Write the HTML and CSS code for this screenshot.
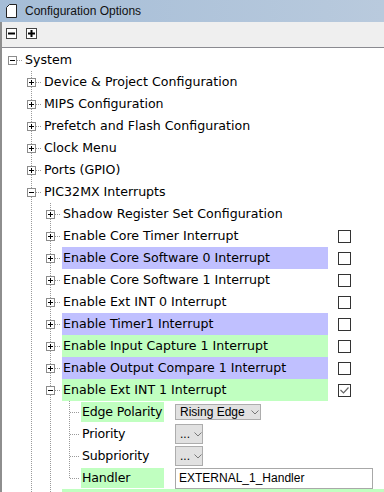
FILE: index.html
```html
<!DOCTYPE html>
<html lang="en">

<head>
  <meta charset="UTF-8">
  <title>Configuration Options</title>
  <link rel="stylesheet" href="styles.css">
</head>

<body>

  <div class="titlebar">
    <svg class="doc-icon" width="11" height="14" viewBox="0 0 11 14">
      <path d="M3.5 0.5 H10.5 V13.5 H0.5 V3.5 Z" fill="#fff" stroke="#222" />
    </svg>
    <span class="title">Configuration Options</span>
  </div>

  <div class="main">
    <div class="toolbar">
      <span class="tool-btn">
        <svg width="11" height="11" viewBox="0 0 11 11"><rect x="0.5" y="0.5" width="10" height="10" fill="#fff" stroke="#444" /><path d="M2 5.5 H9" stroke="#000" stroke-width="2" /></svg>
      </span>
      <span class="tool-btn">
        <svg width="11" height="11" viewBox="0 0 11 11"><rect x="0.5" y="0.5" width="10" height="10" fill="#fff" stroke="#444" /><path d="M2 5.5 H9 M5.5 2 V9" stroke="#000" stroke-width="2" /></svg>
      </span>
    </div>

    <div class="tree">
      <div class="row">
        <span class="cell c"><i class="exp minus"></i></span>
        <span class="label">System</span>
      </div>

      <div class="row">
        <span class="cell"></span><span class="cell c full"><i class="exp plus"></i></span>
        <span class="label">Device &amp; Project Configuration</span>
      </div>
      <div class="row">
        <span class="cell"></span><span class="cell c full"><i class="exp plus"></i></span>
        <span class="label">MIPS Configuration</span>
      </div>
      <div class="row">
        <span class="cell"></span><span class="cell c full"><i class="exp plus"></i></span>
        <span class="label">Prefetch and Flash Configuration</span>
      </div>
      <div class="row">
        <span class="cell"></span><span class="cell c full"><i class="exp plus"></i></span>
        <span class="label">Clock Menu</span>
      </div>
      <div class="row">
        <span class="cell"></span><span class="cell c full"><i class="exp plus"></i></span>
        <span class="label">Ports (GPIO)</span>
      </div>
      <div class="row">
        <span class="cell"></span><span class="cell c full"><i class="exp minus"></i></span>
        <span class="label">PIC32MX Interrupts</span>
      </div>

      <div class="row">
        <span class="cell"></span><span class="cell v"></span><span class="cell c full"><i class="exp plus"></i></span>
        <span class="label">Shadow Register Set Configuration</span>
      </div>
      <div class="row">
        <span class="cell"></span><span class="cell v"></span><span class="cell c full"><i class="exp plus"></i></span>
        <span class="label">Enable Core Timer Interrupt</span>
        <span class="value"><i class="check"></i></span>
      </div>
      <div class="row">
        <span class="cell"></span><span class="cell v"></span><span class="cell c full"><i class="exp plus"></i></span>
        <span class="label blue">Enable Core Software 0 Interrupt</span>
        <span class="value"><i class="check"></i></span>
      </div>
      <div class="row">
        <span class="cell"></span><span class="cell v"></span><span class="cell c full"><i class="exp plus"></i></span>
        <span class="label">Enable Core Software 1 Interrupt</span>
        <span class="value"><i class="check"></i></span>
      </div>
      <div class="row">
        <span class="cell"></span><span class="cell v"></span><span class="cell c full"><i class="exp plus"></i></span>
        <span class="label">Enable Ext INT 0 Interrupt</span>
        <span class="value"><i class="check"></i></span>
      </div>
      <div class="row">
        <span class="cell"></span><span class="cell v"></span><span class="cell c full"><i class="exp plus"></i></span>
        <span class="label blue">Enable Timer1 Interrupt</span>
        <span class="value"><i class="check"></i></span>
      </div>
      <div class="row">
        <span class="cell"></span><span class="cell v"></span><span class="cell c full"><i class="exp plus"></i></span>
        <span class="label green">Enable Input Capture 1 Interrupt</span>
        <span class="value"><i class="check"></i></span>
      </div>
      <div class="row">
        <span class="cell"></span><span class="cell v"></span><span class="cell c full"><i class="exp plus"></i></span>
        <span class="label blue">Enable Output Compare 1 Interrupt</span>
        <span class="value"><i class="check"></i></span>
      </div>
      <div class="row">
        <span class="cell"></span><span class="cell v"></span><span class="cell c full"><i class="exp minus"></i></span>
        <span class="label green">Enable Ext INT 1 Interrupt</span>
        <span class="value">
          <i class="check">
            <svg width="11" height="11" viewBox="0 0 11 11"><path d="M1.5 5 L4.5 8 L9.5 2.5" fill="none" stroke="#666" stroke-width="1.2" /></svg>
          </i>
        </span>
      </div>

      <div class="row">
        <span class="cell"></span><span class="cell v"></span><span class="cell v"></span><span class="cell c full"></span>
        <span class="prop green">Edge Polarity</span>
        <span class="combo wide">Rising Edge
          <svg class="chev" width="8" height="5" viewBox="0 0 8 5"><path d="M0.5 0.5 L4 4 L7.5 0.5" fill="none" stroke="#777" /></svg>
        </span>
      </div>
      <div class="row">
        <span class="cell"></span><span class="cell v"></span><span class="cell v"></span><span class="cell c full"></span>
        <span class="prop">Priority</span>
        <span class="combo">...
          <svg class="chev" width="8" height="5" viewBox="0 0 8 5"><path d="M0.5 0.5 L4 4 L7.5 0.5" fill="none" stroke="#777" /></svg>
        </span>
      </div>
      <div class="row">
        <span class="cell"></span><span class="cell v"></span><span class="cell v"></span><span class="cell c full"></span>
        <span class="prop">Subpriority</span>
        <span class="combo">...
          <svg class="chev" width="8" height="5" viewBox="0 0 8 5"><path d="M0.5 0.5 L4 4 L7.5 0.5" fill="none" stroke="#777" /></svg>
        </span>
      </div>
      <div class="row">
        <span class="cell"></span><span class="cell v"></span><span class="cell v"></span><span class="cell c last"></span>
        <span class="prop green">Handler</span>
        <span class="field">EXTERNAL_1_Handler</span>
      </div>

      <!-- next item, only its top edge is in view -->
      <div class="row">
        <span class="cell"></span><span class="cell v"></span><span class="cell c full"></span>
        <span class="label green"></span>
      </div>
    </div>
  </div>

</body>

</html>
```

FILE: styles.css
```css
* {
  margin: 0;
  padding: 0;
  box-sizing: border-box;
}

body {
  width: 384px;
  height: 492px;
  overflow: hidden;
  background: #fff;
  color: #000;
  font-family: "DejaVu Sans", Verdana, sans-serif;
  font-size: 12.6px;
}

.titlebar {
  height: 22px;
  display: flex;
  align-items: center;
  padding-left: 6px;
  background: linear-gradient(to right, #a5bdd7, #b9cadd);
  font-family: "Liberation Sans", Arial, sans-serif;
  font-size: 12px;
  color: #111;
}

.titlebar .doc-icon {
  display: block;
}

.titlebar .title {
  margin-left: 8px;
}

.main {
  border-left: 2px solid #8e8e8e;
  height: 470px;
}

.toolbar {
  height: 26px;
  display: flex;
  gap: 9px;
  padding: 6px 0 0 4px;
  background: #efefef;
  border-bottom: 1px solid #8a8a90;
}

.tool-btn svg {
  display: block;
}

.tree {
  padding: 1px 0 0 1px;
}

.row {
  height: 22px;
  display: flex;
  align-items: center;
}

/* tree guide columns */
.cell {
  flex: none;
  width: 19px;
  height: 22px;
  display: flex;
  align-items: center;
  background-repeat: no-repeat;
}

.cell.v {
  background-image: repeating-linear-gradient(to bottom, #9a9a9a 0 1px, transparent 1px 2px);
  background-size: 1px 22px;
  background-position: 9px 0;
}

.cell.c {
  background-image: repeating-linear-gradient(to right, #9a9a9a 0 1px, transparent 1px 2px);
  background-size: 10px 1px;
  background-position: 10px 11px;
}

.cell.c.full {
  background-image:
    repeating-linear-gradient(to right, #9a9a9a 0 1px, transparent 1px 2px),
    repeating-linear-gradient(to bottom, #9a9a9a 0 1px, transparent 1px 2px);
  background-size: 10px 1px, 1px 22px;
  background-position: 10px 11px, 9px 0;
}

.cell.c.last {
  background-image:
    repeating-linear-gradient(to right, #9a9a9a 0 1px, transparent 1px 2px),
    repeating-linear-gradient(to bottom, #9a9a9a 0 1px, transparent 1px 2px);
  background-size: 10px 1px, 1px 12px;
  background-position: 10px 11px, 9px 0;
}

.exp {
  width: 9px;
  height: 9px;
  margin-left: 5px;
  border: 1px solid #8c8c8c;
  background: #fff;
  position: relative;
}

.exp::before,
.exp::after {
  content: '';
  position: absolute;
  background: #000;
}

.exp::before {
  left: 1px;
  top: 3px;
  width: 5px;
  height: 1px;
}

.exp.plus::after {
  left: 3px;
  top: 1px;
  width: 1px;
  height: 5px;
}

.label {
  flex: 1;
  height: 22px;
  line-height: 22px;
  margin-left: 2px;
  padding-left: 1px;
  white-space: nowrap;
}

.blue {
  background: #c0c0ff;
}

.green {
  background: #c0ffc0;
}

.value {
  flex: none;
  width: 56px;
  padding-left: 10px;
}

.check {
  display: block;
  width: 13px;
  height: 13px;
  border: 1px solid #333;
  background: #fff;
}

.check svg {
  display: block;
}

/* property rows */
.prop {
  flex: none;
  width: 83px;
  height: 20px;
  line-height: 20px;
  margin-left: 2px;
  padding-left: 1px;
  white-space: nowrap;
  letter-spacing: -0.2px;
}

.combo,
.field {
  margin-left: 11px;
  font-family: "Liberation Sans", Arial, sans-serif;
  font-size: 12px;
}

.combo {
  width: 28px;
  height: 20px;
  display: flex;
  align-items: center;
  padding-left: 4px;
  gap: 4px;
  background: #e1e1e1;
  border: 1px solid #adadad;
}

.combo.wide {
  width: 86px;
  height: 16px;
  gap: 6px;
}

.field {
  width: 198px;
  height: 21px;
  line-height: 19px;
  padding-left: 3px;
  border: 1px solid #a8a8a8;
  background: #fff;
}
```
